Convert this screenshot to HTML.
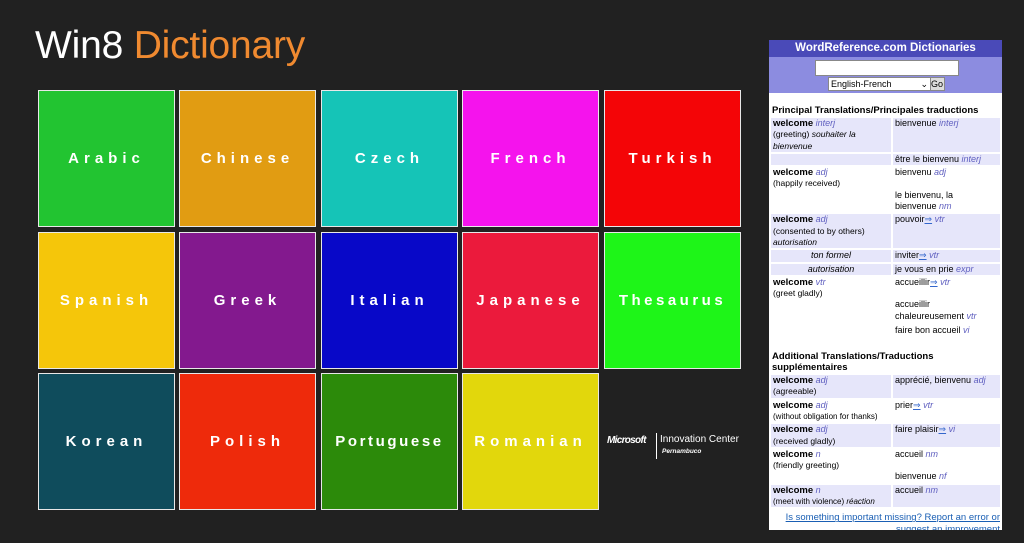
<!DOCTYPE html>
<html><head><meta charset="utf-8"><style>
body{margin:0;width:1024px;height:543px;background:#212121;overflow:hidden;position:relative;font-family:"Liberation Sans",sans-serif}
h1{position:absolute;left:35px;top:24px;margin:0;font-weight:normal;font-size:39px;color:#fff;font-family:"Liberation Sans",sans-serif;letter-spacing:-0.2px}
h1 span{color:#f08a30}
.t{position:absolute;width:135px;height:135px;border:1px solid #e8e8e8;color:#fff;font-weight:bold;font-size:15px;letter-spacing:5px;display:flex;align-items:center;justify-content:center}
.p{position:absolute;left:769px;top:40px;width:233px;height:490px;background:#fff;overflow:hidden;font-size:9px;color:#000}
.hd{background:#4a4ab8;color:#fff;font-weight:bold;font-size:11.5px;text-align:center;height:17px;line-height:16px}
.fm{background:#8c8ce0;height:36px;position:relative}
table{border-collapse:separate;border-spacing:2px 2px;width:233px;table-layout:fixed}
td{vertical-align:top;padding:0 2px;line-height:11.3px;font-size:9px}
td:first-child{width:116px}
.s td{background:#e6e6fa}
b{font-size:9.5px}
i.g{color:#6060c0}
.sec{font-weight:bold;font-size:9.5px;margin:10px 3px 0;line-height:11px}
</style></head><body>
<h1>Win8 <span>Dictionary</span></h1>
<div class="t" style="left:38px;top:90px;background:#22c431">Arabic</div>
<div class="t" style="left:179px;top:90px;background:#e19c12">Chinese</div>
<div class="t" style="left:321px;top:90px;background:#15c4b7">Czech</div>
<div class="t" style="left:462px;top:90px;background:#f513ed">French</div>
<div class="t" style="left:604px;top:90px;background:#f40507">Turkish</div>
<div class="t" style="left:38px;top:232px;background:#f5c60a">Spanish</div>
<div class="t" style="left:179px;top:232px;background:#83198e">Greek</div>
<div class="t" style="left:321px;top:232px;background:#0808c8">Italian</div>
<div class="t" style="left:462px;top:232px;background:#eb1a3c">Japanese</div>
<div class="t" style="left:604px;top:232px;background:#1ef518;letter-spacing:3.5px">Thesaurus</div>
<div class="t" style="left:38px;top:373px;background:#0f4c5c">Korean</div>
<div class="t" style="left:179px;top:373px;background:#ee2a0b">Polish</div>
<div class="t" style="left:321px;top:373px;background:#2c8a0a;letter-spacing:2.6px">Portuguese</div>
<div class="t" style="left:462px;top:373px;background:#e2d70c">Romanian</div>
<div style="position:absolute;left:607px;top:435px;color:#fff;font-size:10px;font-weight:bold;font-style:italic;letter-spacing:-0.7px">Microsoft</div>
<div style="position:absolute;left:656px;top:433px;width:1px;height:26px;background:#fff"></div>
<div style="position:absolute;left:660px;top:434px;color:#fff;font-size:10px">Innovation Center</div>
<div style="position:absolute;left:662px;top:448px;color:#fff;font-size:6.5px;font-weight:bold;font-style:italic">Pernambuco</div>
<div class="p">
<div class="hd">WordReference.com Dictionaries</div>
<div class="fm"><div style="position:absolute;left:46px;top:3px;width:142px;height:14px;background:#fff;border:1px solid #888"></div>
<div style="position:absolute;left:59px;top:20px;width:99px;height:12px;background:#fff;border:1px solid #888;font-size:9px;line-height:12px;padding-left:2px">English-French<span style="float:right;padding-right:2px">⌄</span></div>
<div style="position:absolute;left:161px;top:20px;width:13px;height:12px;background:#ddd;border:1px solid #888;font-size:9px;line-height:12px">Go</div></div>
<div class="sec" style="margin-top:12px">Principal Translations/Principales traductions</div>
<table>
<tr class="s"><td><b>welcome</b> <i class="g">interj</i><br><span style="font-size:8.5px">(greeting) <i>souhaiter la bienvenue</i></span></td><td>bienvenue <i class="g">interj</i></td></tr>
<tr class="s"><td></td><td>être le bienvenu <i class="g">interj</i></td></tr>
<tr><td><b>welcome</b> <i class="g">adj</i><br><span style="font-size:8.5px">(happily received)</span></td><td>bienvenu <i class="g">adj</i><br><br>le bienvenu, la<br>bienvenue <i class="g">nm</i></td></tr>
<tr class="s"><td><b>welcome</b> <i class="g">adj</i><br><span style="font-size:8.5px">(consented to by others)<br><i>autorisation</i></span></td><td>pouvoir<u style="color:#36c">⇒</u> <i class="g">vtr</i></td></tr>
<tr class="s"><td style="text-align:center"><i>ton formel</i></td><td>inviter<u style="color:#36c">⇒</u> <i class="g">vtr</i></td></tr>
<tr class="s"><td style="text-align:center"><i>autorisation</i></td><td>je vous en prie <i class="g">expr</i></td></tr>
<tr><td><b>welcome</b> <i class="g">vtr</i><br><span style="font-size:8.5px">(greet gladly)</span></td><td>accueillir<u style="color:#36c">⇒</u> <i class="g">vtr</i><br><br>accueillir<br>chaleureusement <i class="g">vtr</i><br><span style="line-height:16px">faire bon accueil <i class="g">vi</i></span></td></tr>
</table>
<div class="sec" style="margin-top:11px">Additional Translations/Traductions supplémentaires</div>
<table>
<tr class="s"><td><b>welcome</b> <i class="g">adj</i><br><span style="font-size:8.5px">(agreeable)</span></td><td>apprécié, bienvenu <i class="g">adj</i></td></tr>
<tr><td><b>welcome</b> <i class="g">adj</i><br><span style="font-size:8px">(without obligation for thanks)</span></td><td>prier<u style="color:#36c">⇒</u> <i class="g">vtr</i></td></tr>
<tr class="s"><td><b>welcome</b> <i class="g">adj</i><br><span style="font-size:8.5px">(received gladly)</span></td><td>faire plaisir<u style="color:#36c">⇒</u> <i class="g">vi</i></td></tr>
<tr><td><b>welcome</b> <i class="g">n</i><br><span style="font-size:8.5px">(friendly greeting)</span><br><br></td><td>accueil <i class="g">nm</i><br><br>bienvenue <i class="g">nf</i></td></tr>
<tr class="s"><td><b>welcome</b> <i class="g">n</i><br><span style="font-size:8px">(meet with violence) <i>réaction</i></span></td><td>accueil <i class="g">nm</i></td></tr>
</table>
<div style="text-align:right;color:#1a5fb4;text-decoration:underline;font-size:9.5px;padding-right:2px;margin-top:3px;line-height:12px">Is something important missing? Report an error or suggest an improvement</div>
</div>
</body></html>
